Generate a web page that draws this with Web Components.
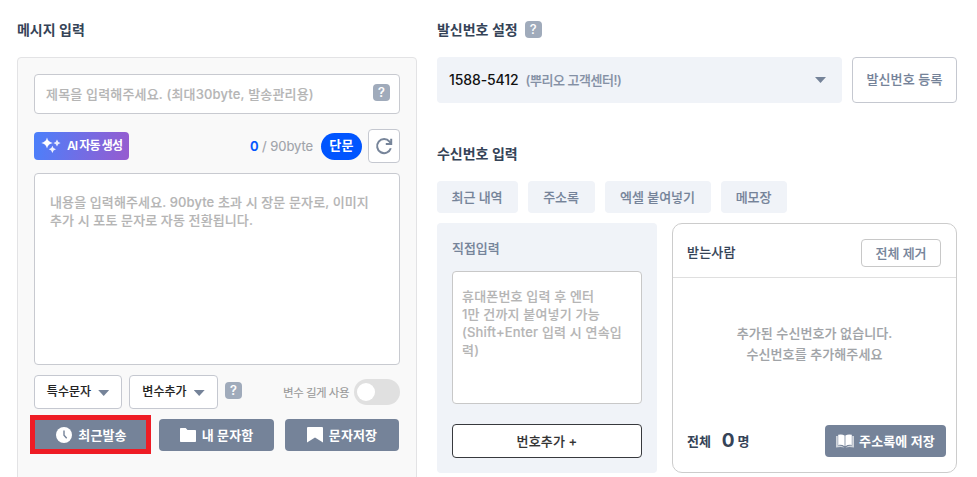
<!DOCTYPE html>
<html lang="ko">
<head>
<meta charset="utf-8">
<title>메시지 입력</title>
<style>
    body {
        margin: 0;
        width: 977px;
        height: 477px;
        overflow: hidden;
        background: #ffffff;
        color: #354357;
        font-family: Inter, "Noto Sans CJK KR", sans-serif;
        font-size: 13px;
        font-weight: 500;
        letter-spacing: -0.05px;
        -webkit-text-stroke-width: 0.12px;
    }
</style>
</head>
<body>

<message-page></message-page>

<script>
// ╭───────────────────────────────────────────────────────╮
// │                        HELPERS                        │
// ╰───────────────────────────────────────────────────────╯
function define(name, html) {
    const template = document.createElement('template');
    template.innerHTML = html;

    customElements.define(name, class extends HTMLElement {
        constructor() {
            super();
            this.attachShadow({ mode: "open" });
            this.shadowRoot.appendChild(template.content.cloneNode(true));
        }
    });
}

// ╭───────────────────────────────────────────────────────╮
// │                         ICONS                         │
// ╰───────────────────────────────────────────────────────╯
const icons = {
    sparkle: `<svg width="20" height="18" viewBox="0 0 20 18" fill="#fff">
        <path d="M6 .6Q6.9 5.1 11.8 6Q6.9 6.9 6 11.6Q5.1 6.9.3 6Q5.1 5.1 6 .6Z"/>
        <path d="M16 2.6Q16.6 5.4 19.6 6Q16.6 6.6 16 9.6Q15.4 6.6 12.4 6Q15.4 5.4 16 2.6Z" opacity=".85"/>
        <path d="M11.4 8.7Q12 11.7 15 12.3Q12 12.9 11.4 16Q10.8 12.9 7.8 12.3Q10.8 11.7 11.4 8.7Z" opacity=".9"/>
    </svg>`,
    refresh: `<svg width="18" height="18" viewBox="0 0 18 18" fill="none" stroke="#77859a" stroke-width="2">
        <path d="M15.8 11.3A7 7 0 1 1 14.5 4.6L16 6.4"/>
        <path d="M16.2 1.7V7.1H10.8"/>
    </svg>`,
    clock: `<svg width="16" height="16" viewBox="0 0 16 16">
        <circle cx="8" cy="8" r="8" fill="#fff"/>
        <path d="M8 3.6V8.2L10.7 11.3" fill="none" stroke="#758399" stroke-width="1.4"/>
    </svg>`,
    folder: `<svg width="16" height="14" viewBox="0 0 16 14" fill="#fff">
        <path d="M0 .8Q0 0 .8 0H5.7L7.5 2H15.2Q16 2 16 2.8V13.2Q16 14 15.2 14H.8Q0 14 0 13.2Z"/>
    </svg>`,
    bookmark: `<svg width="16" height="16" viewBox="0 0 16 16" fill="#fff">
        <path d="M0 1Q0 0 1 0H15Q16 0 16 1V15.6L8 10.4L0 15.6Z"/>
    </svg>`,
    book: `<svg width="18" height="14" viewBox="0 0 18 14" fill="#fff">
        <path d="M0 2H1.8V11.5Q5.5 11 8.6 13.4Q4.5 12.4 0 13.4ZM18 2H16.2V11.5Q12.5 11 9.4 13.4Q13.5 12.4 18 13.4Z" opacity=".65"/>
        <path d="M2.2.8Q6-.2 8.6 1.6V12.3Q6 10.4 2.2 11ZM15.8.8Q12-.2 9.4 1.6V12.3Q12 10.4 15.8 11Z"/>
    </svg>`
};

class UiIcon extends HTMLElement {
    constructor() {
        super();
        this.attachShadow({ mode: "open" });
    }

    connectedCallback() {
        this.shadowRoot.innerHTML = /* html */`
            <style>
                :host { display: block; flex: none; }
                svg { display: block; }
            </style>
            ${icons[this.getAttribute("name")]}
        `;
    }
}
customElements.define("ui-icon", UiIcon);

// ╭───────────────────────────────────────────────────────╮
// │                   SMALL COMPONENTS                    │
// ╰───────────────────────────────────────────────────────╯
define("help-badge", /* html */`
    <style>
        :host {
            display: flex;
            flex: none;
            justify-content: center;
            align-items: center;
            width: 17px;
            height: 17px;
            border-radius: 4px;
            background: #a0abbb;
            color: #ffffff;
            font-size: 13px;
            font-weight: 500;
            line-height: 17px;
            letter-spacing: 0;
        }
    </style>
    <span>?</span>
`);

define("section-title", /* html */`
    <style>
        :host {
            display: flex;
            align-items: center;
            gap: 7px;
            height: 20px;
            color: #354357;
            font-size: 14px;
            font-weight: 600;
            line-height: 20px;
            letter-spacing: -0.02px;
            -webkit-text-stroke-width: 0;
        }
        ::slotted(help-badge) { margin-bottom: 1px; }
    </style>
    <slot></slot>
`);

define("drop-arrow", /* html */`
    <style>
        :host {
            display: block;
            flex: none;
            width: 11px;
            height: 6px;
            background: #758399;
            clip-path: polygon(0 0, 100% 0, 50% 100%);
        }
    </style>
`);

// Bordered or filled button, colours by variant
define("ui-button", /* html */`
    <style>
        :host {
            display: flex;
            box-sizing: border-box;
            flex: none;
            justify-content: center;
            align-items: center;
            gap: 6px;
            height: 32px;
            border-radius: 4px;
            line-height: 18px;
            white-space: nowrap;
        }
        :host([variant="outline"]) {
            border: 1px solid #c5c8d0;
            background: #ffffff;
            color: #758399;
        }
        :host([variant="solid"]) {
            background: #758399;
            color: #ffffff;
            font-weight: 600;
            letter-spacing: 0.12px;
            -webkit-text-stroke-width: 0;
        }
        :host([variant="tab"]) {
            padding-right: 1px;
            background: #f0f3f8;
            color: #758399;
            letter-spacing: -0.05px;
        }
        :host([variant="dark"]) {
            border: 1px solid #37393d;
            background: #ffffff;
            color: #333333;
        }
        :host([variant="ai"]) {
            background: linear-gradient(100deg, #4b80fb, #975bcf);
            color: #ffffff;
            font-weight: 600;
            -webkit-text-stroke-width: 0;
        }
    </style>
    <slot></slot>
`);

define("text-box", /* html */`
    <style>
        :host {
            display: block;
            box-sizing: border-box;
            border: 1px solid #c8cad0;
            border-radius: 4px;
            background: #ffffff;
            color: #b5b5b5;
            line-height: 18px;
        }
    </style>
    <slot></slot>
`);

define("toggle-switch", /* html */`
    <style>
        :host {
            display: block;
            box-sizing: border-box;
            width: 46px;
            height: 26px;
            padding: 4px 3px;
            border-radius: 13px;
            background: #e0e0e0;
        }
        i {
            display: block;
            width: 18px;
            height: 18px;
            border-radius: 50%;
            background: #ffffff;
        }
    </style>
    <i></i>
`);

// ╭───────────────────────────────────────────────────────╮
// │                    MESSAGE EDITOR                     │
// ╰───────────────────────────────────────────────────────╯
define("message-editor", /* html */`
    <style>
        :host {
            display: block;
            box-sizing: border-box;
            height: 430px;
            padding: 16px;
            border: 1px solid #e3e3e5;
            border-radius: 4px;
            background: #f9f9f9;
        }
        .row { display: flex; align-items: center; }
        .subject {
            display: flex;
            justify-content: space-between;
            align-items: center;
            height: 40px;
            padding: 0 9px 3px 11px;
            letter-spacing: 0.17px;
        }
        .subject span { padding-top: 3px; }
        .tools { height: 34px; margin: 15px 0 10px; }
        .ai {
            width: 95px;
            height: 28px;
            margin-right: auto;
            gap: 6px;
            font-size: 12px;
            letter-spacing: -0.9px;
        }
        .count { color: #9fa3aa; font-weight: 400; letter-spacing: -0.08px; padding-bottom: 1px; }
        .count b { color: #0055ff; font-weight: 600; }
        .type {
            box-sizing: border-box;
            width: 41px;
            height: 27px;
            margin: 0 6px 0 8px;
            border-radius: 14px;
            background: #0055ff;
            color: #ffffff;
            font-weight: 600;
            line-height: 25px;
            letter-spacing: 0.3px;
            text-align: center;
            -webkit-text-stroke-width: 0;
        }
        .refresh { width: 32px; height: 34px; }
        .content { height: 192px; padding: 19px 14px 20px 15px; letter-spacing: 0.11px; }
        .options { height: 34px; margin: 10px 0; }
        .options ui-button {
            height: 34px;
            margin-right: 7px;
            gap: 7px;
            color: #222222;
            font-size: 12px;
            letter-spacing: 0.05px;
        }
        .options drop-arrow { margin-top: 2px; }
        .options help-badge { margin-bottom: 3px; }
        .long { margin: 0 5px 0 auto; color: #999999; font-size: 11.5px; font-weight: 400; letter-spacing: -0.5px; }
        .actions { gap: 10px; }
        .save { margin-left: 1px; }
        .recent { position: relative; }
        .recent::after {
            content: "";
            position: absolute;
            inset: -4px -2px -3px -4px;
            border: 5px solid #ee1c25;
        }
    </style>

    <text-box class="subject">
        <span>제목을 입력해주세요. (최대30byte, 발송관리용)</span>
        <help-badge></help-badge>
    </text-box>
    <div class="row tools">
        <ui-button class="ai" variant="ai"><ui-icon name="sparkle"></ui-icon><span>AI 자동 생성</span></ui-button>
        <span class="count"><b>0</b> / 90byte</span>
        <span class="type">단문</span>
        <ui-button class="refresh" variant="outline"><ui-icon name="refresh"></ui-icon></ui-button>
    </div>
    <text-box class="content">내용을 입력해주세요. 90byte 초과 시 장문 문자로, 이미지<br>추가 시 포토 문자로 자동 전환됩니다.</text-box>
    <div class="row options">
        <ui-button variant="outline" style="width: 88px"><span>특수문자</span><drop-arrow></drop-arrow></ui-button>
        <ui-button variant="outline" style="width: 89px"><span>변수추가</span><drop-arrow></drop-arrow></ui-button>
        <help-badge></help-badge>
        <span class="long">변수 길게 사용</span>
        <toggle-switch></toggle-switch>
    </div>
    <div class="row actions">
        <ui-button class="recent" variant="solid" style="width: 115px"><ui-icon name="clock"></ui-icon><span>최근발송</span></ui-button>
        <ui-button variant="solid" style="width: 115px"><ui-icon name="folder"></ui-icon><span>내 문자함</span></ui-button>
        <ui-button class="save" variant="solid" style="width: 114px"><ui-icon name="bookmark"></ui-icon><span>문자저장</span></ui-button>
    </div>
`);

// ╭───────────────────────────────────────────────────────╮
// │                    SENDER NUMBER                      │
// ╰───────────────────────────────────────────────────────╯
define("sender-picker", /* html */`
    <style>
        :host { display: flex; gap: 10px; }
        .select {
            display: flex;
            box-sizing: border-box;
            flex: 1;
            align-items: center;
            height: 46px;
            padding: 0 16px 0 12px;
            border-radius: 4px;
            background: #f0f3f8;
        }
        .number {
            margin-right: 7px;
            padding-bottom: 2px;
            color: #111111;
            font-size: 14px;
            letter-spacing: -0.1px;
            -webkit-text-stroke-width: 0;
        }
        .name { padding-bottom: 2px; color: #8490a5; letter-spacing: -0.45px; }
        drop-arrow { margin-left: auto; }
        ui-button { width: 105px; height: 46px; padding-bottom: 2px; letter-spacing: 0.12px; }
    </style>
    <div class="select">
        <span class="number">1588-5412</span>
        <span class="name">(뿌리오 고객센터!)</span>
        <drop-arrow></drop-arrow>
    </div>
    <ui-button variant="outline"><span>발신번호 등록</span></ui-button>
`);

// ╭───────────────────────────────────────────────────────╮
// │                   RECIPIENT PANELS                    │
// ╰───────────────────────────────────────────────────────╯
define("direct-input", /* html */`
    <style>
        :host {
            display: flex;
            box-sizing: border-box;
            flex-direction: column;
            padding: 15px;
            border-radius: 4px;
            background: #f0f3f8;
            color: #758399;
        }
        .label { height: 20px; margin-bottom: 13px; line-height: 20px; }
        text-box {
            height: 133px;
            margin-bottom: 20px;
            padding: 15px 9px;
            border-color: #c8c8c8;
            letter-spacing: 0.17px;
        }
        ui-button { height: 34px; letter-spacing: 0.15px; }
    </style>
    <span class="label">직접입력</span>
    <text-box>휴대폰번호 입력 후 엔터<br>1만 건까지 붙여넣기 가능<br>(Shift+Enter 입력 시 연속입<br>력)</text-box>
    <ui-button variant="dark"><span>번호추가 +</span></ui-button>
`);

define("recipient-list", /* html */`
    <style>
        :host {
            display: flex;
            box-sizing: border-box;
            flex-direction: column;
            border: 1px solid #cccccc;
            border-radius: 10px;
            background: #ffffff;
        }
        header, footer {
            display: flex;
            justify-content: space-between;
            align-items: center;
        }
        header { height: 53px; padding: 0 15px 0 14px; border-bottom: 1px solid #dfdfdf; }
        header ui-button { width: 80px; height: 28px; margin-top: 5px; border-color: #c8c8c8; }
        .title { margin-top: 1px; letter-spacing: 0.2px; }
        .empty {
            flex: 1;
            padding-top: 45px;
            color: #a0a3a7;
            line-height: 21px;
            letter-spacing: 0.08px;
            text-align: center;
        }
        footer { height: 32px; padding: 0 10px 15px 14px; }
        .total {
            display: flex;
            align-items: center;
            padding-bottom: 1px;
            font-weight: 600;
            -webkit-text-stroke-width: 0;
        }
        .total b { margin: 0 3px 0 11px; font-size: 19px; font-weight: 700; }
        footer ui-button { width: 121px; gap: 5px; }
    </style>
    <header>
        <span class="title">받는사람</span>
        <ui-button variant="outline"><span>전체 제거</span></ui-button>
    </header>
    <div class="empty">추가된 수신번호가 없습니다.<br>수신번호를 추가해주세요</div>
    <footer>
        <span class="total">전체<b>0</b>명</span>
        <ui-button variant="solid"><ui-icon name="book"></ui-icon><span>주소록에 저장</span></ui-button>
    </footer>
`);

// ╭───────────────────────────────────────────────────────╮
// │                         PAGE                          │
// ╰───────────────────────────────────────────────────────╯
define("message-page", /* html */`
    <style>
        :host {
            display: grid;
            box-sizing: border-box;
            grid-template-columns: 400px 520px;
            align-items: start;
            gap: 20px;
            padding: 20px 20px 0 17px;
        }
        section-title { margin-bottom: 17px; }
        .receive { margin: 41px 0 17px; }
        .tabs { display: flex; gap: 10px; margin-bottom: 10px; }
        .panels {
            display: grid;
            grid-template-columns: 220px 285px;
            gap: 15px;
            height: 250px;
        }
    </style>
    <section>
        <section-title>메시지 입력</section-title>
        <message-editor></message-editor>
    </section>
    <section>
        <section-title><span>발신번호 설정</span><help-badge></help-badge></section-title>
        <sender-picker></sender-picker>
        <section-title class="receive">수신번호 입력</section-title>
        <div class="tabs">
            <ui-button variant="tab" style="width: 81px"><span>최근 내역</span></ui-button>
            <ui-button variant="tab" style="width: 67px"><span>주소록</span></ui-button>
            <ui-button variant="tab" style="width: 106px"><span>엑셀 붙여넣기</span></ui-button>
            <ui-button variant="tab" style="width: 66px"><span>메모장</span></ui-button>
        </div>
        <div class="panels">
            <direct-input></direct-input>
            <recipient-list></recipient-list>
        </div>
    </section>
`);
</script>
</body>
</html>
